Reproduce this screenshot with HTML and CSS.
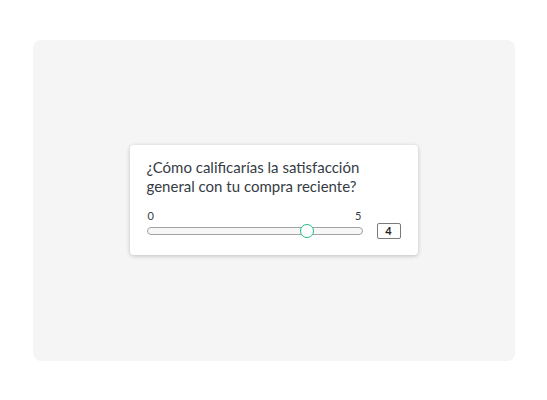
FILE: index.html
```html
<!DOCTYPE html>
<html lang="es">
<head>
<meta charset="utf-8">
<link rel="stylesheet" href="styles.css">
</head>
<body>
<div class="panel">
  <div class="card">
    <p class="question">¿Cómo calificarías la satisfacción<br>general con tu compra reciente?</p>
    <div class="slider">
      <div class="scale">
        <div class="labels"><span>0</span><span>5</span></div>
        <div class="track">
          <span class="thumb" style="left: 159px"></span>
        </div>
      </div>
      <div class="value">4</div>
    </div>
  </div>
</div>
</body>
</html>
```
FILE: styles.css
```css
html, body {
  margin: 0;
  padding: 0;
  background: #ffffff;
}
body {
  min-height: 100vh;
  display: flex;
  align-items: center;
  justify-content: center;
  font-family: "Lato", "Liberation Sans", sans-serif;
}
.panel {
  width: 482px;
  height: 321px;
  background: #f5f5f5;
  border-radius: 8px;
  display: flex;
  align-items: center;
  justify-content: center;
}
.card {
  width: 288px;
  box-sizing: border-box;
  background: #ffffff;
  border-radius: 4px;
  box-shadow: 0 1px 4px rgba(0, 0, 0, 0.22);
  padding: 13px 17px 16px 17px;
}
.question {
  margin: 0 0 13px 0;
  font-size: 15px;
  line-height: 19px;
  color: #363c44;
}
.slider {
  display: flex;
  align-items: flex-end;
  gap: 14px;
}
.scale {
  width: 216px;
}
.labels {
  display: flex;
  justify-content: space-between;
  font-size: 11px;
  line-height: 13px;
  color: #363c44;
  padding: 0 1px 0 1px;
}
.track {
  position: relative;
  margin: 5px 0 4px 0;
  border: 1px solid #a3a3a3;
  border-radius: 5px;
  background: #f7f7f7;
  box-sizing: border-box;
  height: 8px;
}
.thumb {
  position: absolute;
  top: 50%;
  width: 14px;
  height: 14px;
  box-sizing: border-box;
  border: 1.5px solid #1fbf86;
  border-radius: 50%;
  background: #ffffff;
  transform: translate(-50%, -50%);
}
.value {
  width: 24px;
  height: 16px;
  box-sizing: border-box;
  border: 1px solid #7a7a7a;
  border-radius: 2px;
  font-size: 11px;
  font-weight: 700;
  line-height: 14px;
  text-align: center;
  color: #222;
}
```
